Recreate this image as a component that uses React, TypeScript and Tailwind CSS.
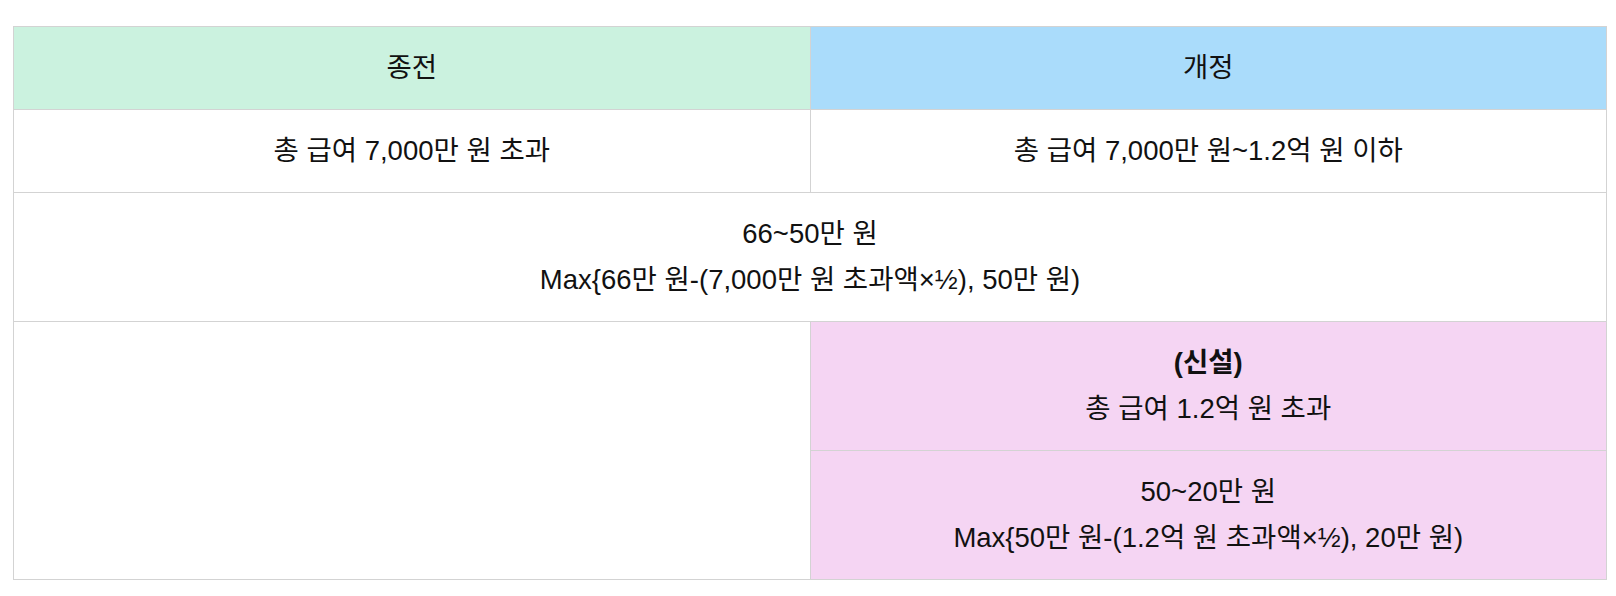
import React from "react";

const cell = "border border-[#d3d3d3] px-3 py-[18px] text-center align-middle";

export default function App() {
  return (
    <div className="min-h-[596px] w-[1616px] bg-white pt-[26px] pl-[13px]" style={{ fontFamily: '"Liberation Sans", "Noto Sans CJK KR", sans-serif' }}>
      <table className="w-[1594px] table-fixed border-collapse text-[27.5px] leading-[46px] text-[#111]">
        <colgroup>
          <col className="w-1/2" />
          <col className="w-1/2" />
        </colgroup>
        <tbody>
          <tr>
            <td className={`${cell} bg-[#cbf2df]`}>종전</td>
            <td className={`${cell} bg-[#aadcfb]`}>개정</td>
          </tr>
          <tr>
            <td className={cell}>총 급여 7,000만 원 초과</td>
            <td className={cell}>총 급여 7,000만 원~1.2억 원 이하</td>
          </tr>
          <tr>
            <td className={cell} colSpan={2}>
              <div>66~50만 원</div>
              <div>Max{"{"}66만 원-(7,000만 원 초과액×½), 50만 원)</div>
            </td>
          </tr>
          <tr>
            <td className={cell} rowSpan={2}></td>
            <td className={`${cell} bg-[#f5d5f3]`}>
              <div className="font-bold">(신설)</div>
              <div>총 급여 1.2억 원 초과</div>
            </td>
          </tr>
          <tr>
            <td className={`${cell} bg-[#f5d5f3]`}>
              <div>50~20만 원</div>
              <div>Max{"{"}50만 원-(1.2억 원 초과액×½), 20만 원)</div>
            </td>
          </tr>
        </tbody>
      </table>
    </div>
  );
}
